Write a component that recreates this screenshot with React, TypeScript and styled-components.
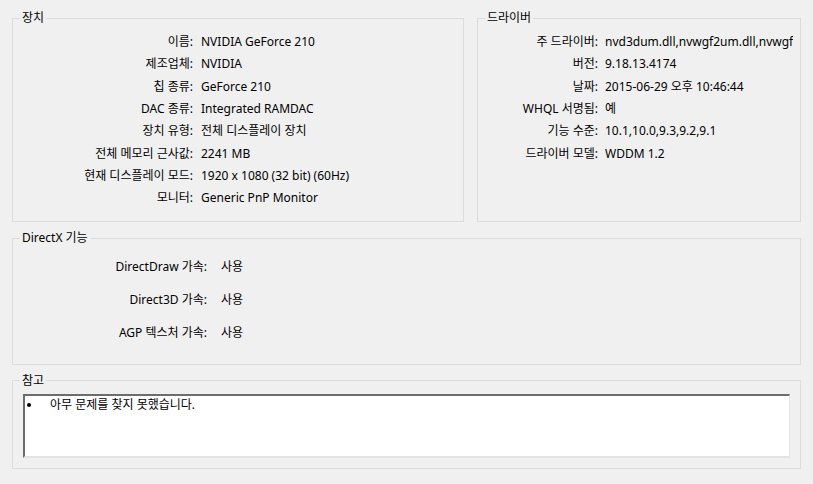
import styled, { createGlobalStyle } from "styled-components";

const GlobalStyle = createGlobalStyle`
  html, body {
    margin: 0;
    padding: 0;
    background: #f0f0f0;
  }
  body {
    font-family: "Noto Sans", "Noto Sans CJK KR", sans-serif;
    font-size: 12px;
    color: #000;
  }
`;

const deviceRows = [
  ["이름:", "NVIDIA GeForce 210"],
  ["제조업체:", "NVIDIA"],
  ["칩 종류:", "GeForce 210"],
  ["DAC 종류:", "Integrated RAMDAC"],
  ["장치 유형:", "전체 디스플레이 장치"],
  ["전체 메모리 근사값:", "2241 MB"],
  ["현재 디스플레이 모드:", "1920 x 1080 (32 bit) (60Hz)"],
  ["모니터:", "Generic PnP Monitor"],
];

// the first value is wider than its column, the group clips it as the original dialog does
const driverRows = [
  ["주 드라이버:", "nvd3dum.dll,nvwgf2um.dll,nvwgf2um.dll,nvwgf2um.dll"],
  ["버전:", "9.18.13.4174"],
  ["날짜:", "2015-06-29 오후 10:46:44"],
  ["WHQL 서명됨:", "예"],
  ["기능 수준:", "10.1,10.0,9.3,9.2,9.1"],
  ["드라이버 모델:", "WDDM 1.2"],
];

const dxRows = [
  ["DirectDraw 가속:", "사용"],
  ["Direct3D 가속:", "사용"],
  ["AGP 텍스처 가속:", "사용"],
];

export default function App() {
  return (
    <>
      <GlobalStyle />
      <PageSld>
        <TopRowSld>
          <GroupSld $width="452px">
            <LegendSld>장치</LegendSld>
            <InfoGridSld $label="180px" $gap="8px" $row="22.3px" $top="5px">
              {deviceRows.map(([k, v]) => (
                <RowSld key={k}>
                  <LabelSld>{k}</LabelSld>
                  <ValueSld>{v}</ValueSld>
                </RowSld>
              ))}
            </InfoGridSld>
          </GroupSld>
          <GroupSld $grow>
            <LegendSld>드라이버</LegendSld>
            <InfoGridSld $label="120px" $gap="7px" $row="22.3px" $top="5px" $right="7px">
              {driverRows.map(([k, v]) => (
                <RowSld key={k}>
                  <LabelSld>{k}</LabelSld>
                  <ValueSld>{v}</ValueSld>
                </RowSld>
              ))}
            </InfoGridSld>
          </GroupSld>
        </TopRowSld>

        <GroupSld>
          <LegendSld>DirectX 기능</LegendSld>
          <InfoGridSld $label="194px" $gap="14px" $row="33px" $top="4.5px" $bottom="14px">
            {dxRows.map(([k, v]) => (
              <RowSld key={k}>
                <LabelSld>{k}</LabelSld>
                <ValueSld>{v}</ValueSld>
              </RowSld>
            ))}
          </InfoGridSld>
        </GroupSld>

        <GroupSld>
          <LegendSld>참고</LegendSld>
          <NoteBodySld>
            <NoteBoxSld>
              <NoteItemSld>
                <BulletSld />
                아무 문제를 찾지 못했습니다.
              </NoteItemSld>
            </NoteBoxSld>
          </NoteBodySld>
        </GroupSld>
      </PageSld>
    </>
  );
}

const PageSld = styled.div`
  width: 813px;
  height: 484px;
  box-sizing: border-box;
  padding: 10px 12px 0 12px;
  display: flex;
  flex-direction: column;
  gap: 8px;
`;

const TopRowSld = styled.div`
  display: flex;
  gap: 13px;
  height: 212px;
`;

const GroupSld = styled.fieldset<{ $width?: string; $grow?: boolean }>`
  margin: 0;
  padding: 0;
  min-width: 0;
  border: 1px solid #dcdcdc;
  box-sizing: border-box;
  ${(p) => (p.$width ? `width: ${p.$width}; flex: none;` : "")}
  ${(p) => (p.$grow ? "flex: 1;" : "")}
`;

const LegendSld = styled.legend`
  margin-left: 7px;
  padding: 0 2px;
  line-height: 16px;
  font-size: 12px;
`;

const InfoGridSld = styled.div<{
  $label: string;
  $gap: string;
  $row: string;
  $top: string;
  $right?: string;
  $bottom?: string;
}>`
  display: grid;
  grid-template-columns: ${(p) => p.$label} minmax(0, 1fr);
  grid-auto-rows: ${(p) => p.$row};
  column-gap: ${(p) => p.$gap};
  padding-top: ${(p) => p.$top};
  padding-right: ${(p) => p.$right || "0"};
  padding-bottom: ${(p) => p.$bottom || "0"};
`;

const RowSld = styled.div`
  display: contents;
`;

const LabelSld = styled.div`
  text-align: right;
  white-space: nowrap;
  align-self: center;
  line-height: 16px;
`;

const ValueSld = styled.div`
  white-space: nowrap;
  overflow: hidden;
  align-self: center;
  line-height: 16px;
`;

const NoteBodySld = styled.div`
  padding: 5px 10px 10px 10px;
`;

const NoteBoxSld = styled.div`
  height: 64px;
  box-sizing: border-box;
  background: #fff;
  border-top: 2px solid #6d6d6d;
  border-left: 2px solid #6d6d6d;
  border-right: 1px solid #e3e3e3;
  border-bottom: 2px solid #e3e3e3;
  padding: 1px 0 0 2px;
`;

const NoteItemSld = styled.div`
  display: flex;
  align-items: center;
  line-height: 16px;
`;

const BulletSld = styled.span`
  width: 4px;
  height: 4px;
  border-radius: 50%;
  background: #000;
  margin-right: 19px;
  flex: none;
`;
